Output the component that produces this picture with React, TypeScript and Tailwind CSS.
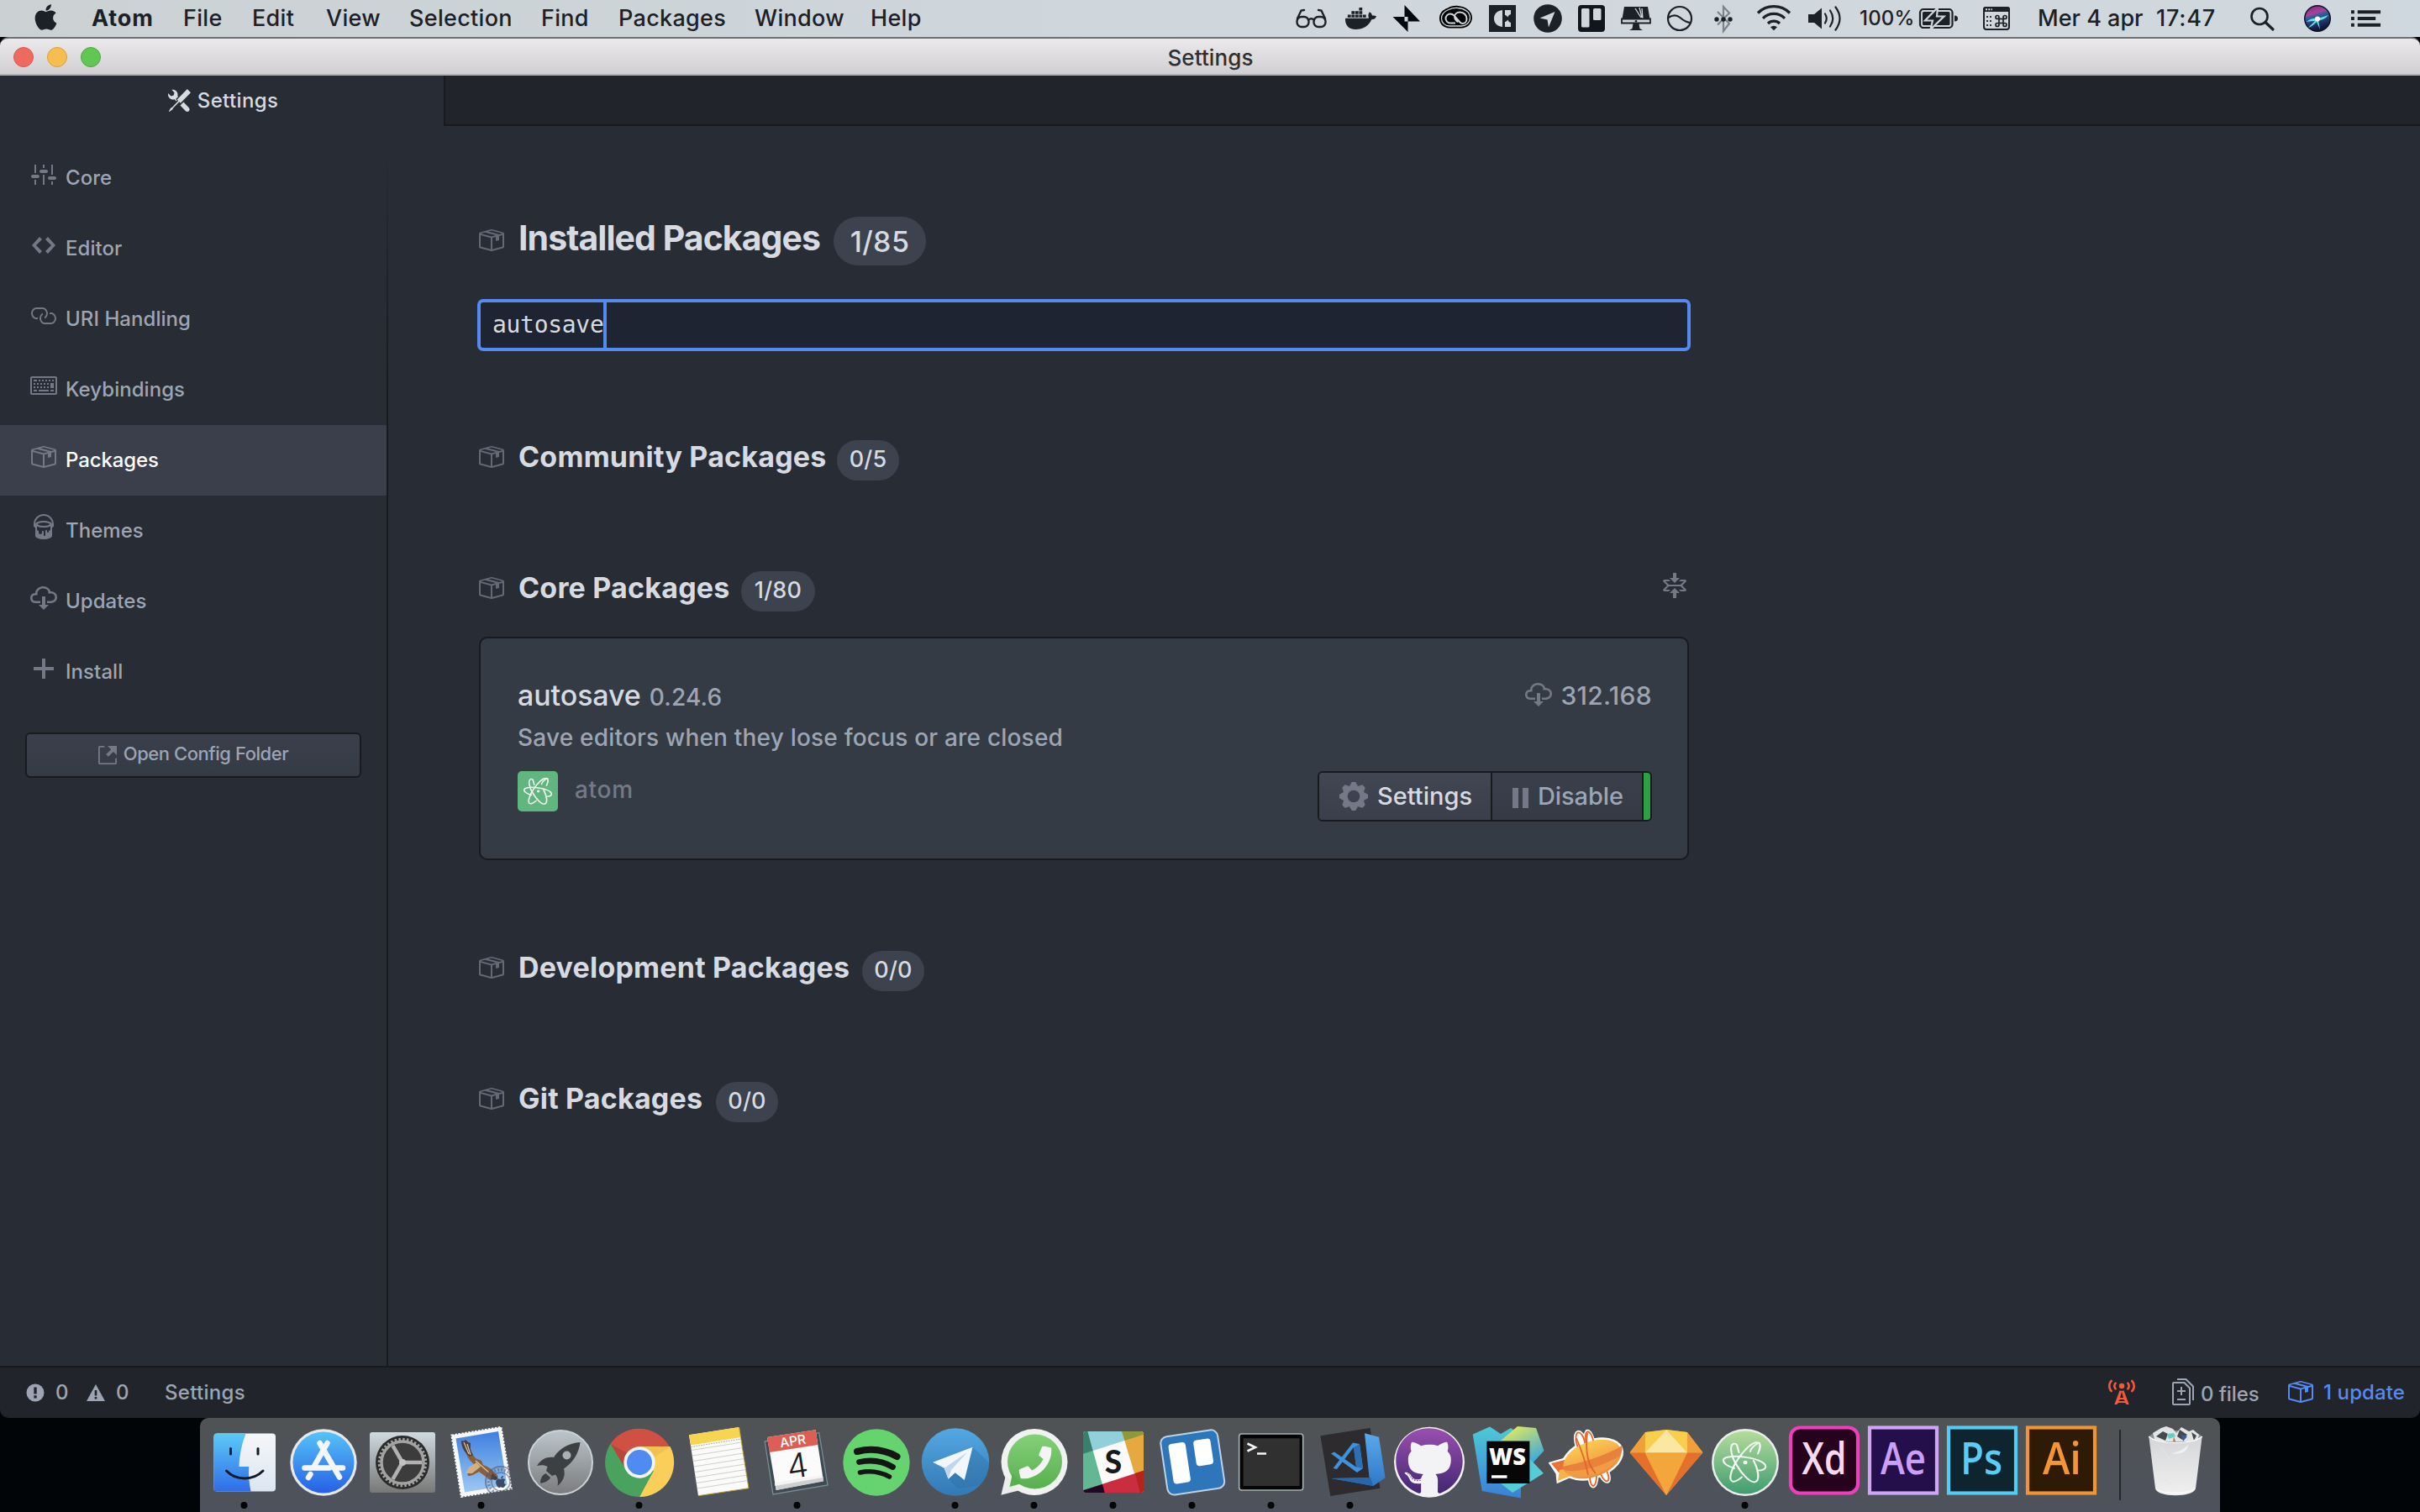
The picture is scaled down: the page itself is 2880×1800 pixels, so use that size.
import React from "react";
import { FaApple, FaDocker, FaGithub, FaPhoneAlt } from "react-icons/fa";

/* ---------- Octicon glyphs (16-unit grid, 2px per unit by default) ---------- */

const OCTICONS = {
  settings: "M4 7H3V2h1v5zm-1 7h1v-3H3v3zm5 0h1V8H8v6zm5 0h1v-2h-1v2zm1-12h-1v6h1V2zM9 2H8v2h1V2zM5 8H2c-.55 0-1 .45-1 1s.45 1 1 1h3c.55 0 1-.45 1-1s-.45-1-1-1zm5-3H7c-.55 0-1 .45-1 1s.45 1 1 1h3c.55 0 1-.45 1-1s-.45-1-1-1zm5 4h-3c-.55 0-1 .45-1 1s.45 1 1 1h3c.55 0 1-.45 1-1s-.45-1-1-1z",
  code: "M9.5 3L8 4.5 11.5 8 8 11.5 9.5 13 14 8 9.5 3zm-5 0L0 8l4.5 5L6 11.5 2.5 8 6 4.5 4.5 3z",
  link: "M4 9h1v1H4c-1.5 0-3-1.69-3-3.5S2.55 3 4 3h4c1.45 0 3 1.69 3 3.5 0 1.41-.91 2.72-2 3.25V8.59c.58-.45 1-1.27 1-2.09C10 5.22 8.98 4 8 4H4c-.98 0-2 1.22-2 2.5S3 9 4 9zm9-3h-1v1h1c1 0 2 1.22 2 2.5S13.98 12 13 12H9c-.98 0-2-1.22-2-2.5 0-.83.42-1.64 1-2.09V6.25c-1.09.53-2 1.84-2 3.25C6 11.31 7.55 13 9 13h4c1.45 0 3-1.69 3-3.5S14.5 6 13 6z",
  keyboard: "M10 5H9V4h1v1zM3 6H2v1h1V6zm5-2H7v1h1V4zM4 4H2v1h2V4zm8 7h2v-1h-2v1zM8 7h1V6H8v1zm-4 3H2v1h2v-1zm8-6h-1v1h1V4zm2 0h-1v1h1V4zm-2 5h2V6h-2v3zm4-6v9c0 .55-.45 1-1 1H1c-.55 0-1-.45-1-1V3c0-.55.45-1 1-1h14c.55 0 1 .45 1 1zm-1 0H1v9h14V3zM6 7h1V6H6v1zm0-3H5v1h1V4zM4 7h1V6H4v1zm1 4h6v-1H5v1zm5-4h1V6h-1v1zM3 8H2v1h1V8zm5 0v1h1V8H8zM6 8v1h1V8H6zM5 8H4v1h1V8zm5 1h1V8h-1v1z",
  pkg: "M1 4.27v7.47c0 .45.3.84.75.97l6.5 1.73c.16.05.34.05.5 0l6.5-1.73c.45-.13.75-.52.75-.97V4.27c0-.45-.3-.84-.75-.97l-6.5-1.74a1.4 1.4 0 0 0-.5 0L1.75 3.3c-.45.13-.75.52-.75.97zm7 9.09l-6-1.59V5l6 1.61v6.75zM2 4l2.5-.67L11 5.06l-2.5.67L2 4zm13 7.77l-6 1.59V6.61l2-.55V8.5l2-.53V5.53L15 5v6.77zm-2-7.24L6.5 2.8l2-.53L15 4l-2 .53z",
  paintcan: "M6 0C2.69 0 0 2.69 0 6v1c0 .55.45 1 1 1v5c0 1.1 2.24 2 5 2s5-.9 5-2V8c.55 0 1-.45 1-1V6c0-3.31-2.69-6-6-6zm3 10v.5c0 .28-.22.5-.5.5s-.5-.22-.5-.5V10c0-.28-.22-.5-.5-.5s-.5.22-.5.5v2.5c0 .28-.22.5-.5.5s-.5-.22-.5-.5v-2c0-.28-.22-.5-.5-.5s-.5.22-.5.5v.5c0 .55-.45 1-1 1s-1-.45-1-1v-1c-.55 0-1-.45-1-1V7.2c.91.49 2.36.8 4 .8 1.64 0 3.09-.31 4-.8V9c0 .55-.45 1-1 1zM6 7c-1.68 0-3.12-.41-3.71-1C2.88 5.41 4.32 5 6 5c1.68 0 3.12.41 3.71 1-.59.59-2.03 1-3.71 1zm0-3c-2.76 0-5 .89-5 2 0-2.76 2.24-5 5-5s5 2.24 5 5c0-1.1-2.24-2-5-2z",
  cloud: "M9 12h2l-3 3-3-3h2V7h2v5zm3-8c0-.44-.91-3-4.5-3C5.08 1 3 2.92 3 5 1.02 5 0 6.52 0 8c0 1.53 1 3 3 3h3V9.7H3C1.38 9.7 1.3 8.28 1.3 8c0-.17.05-1.7 1.7-1.7h1.3V5c0-1.39 1.56-2.7 3.2-2.7 2.55 0 3.13 1.55 3.2 1.8v1.2H12c.81 0 2.7.22 2.7 2.2 0 2.09-2.25 2.2-2.7 2.2h-2V11h2c2.08 0 4-1.16 4-3.5C16 5.06 14.08 4 12 4z",
  plus: "M12 9H7v5H5V9H0V7h5V2h2v5h5v2z",
  external: "M11 10h1v3c0 .55-.45 1-1 1H1c-.55 0-1-.45-1-1V3c0-.55.45-1 1-1h3v1H1v10h10v-3zM6 2l2.25 2.25L5 7.5 6.5 9l3.25-3.25L12 8V2H6z",
  tools: "M4.48 7.27c.26.26 1.28 1.33 1.28 1.33l.56-.58-.88-.91 1.69-1.8s-.76-.74-.43-.45c.32-1.19.03-2.51-.87-3.44C4.93.5 3.66.2 2.52.51l1.93 2-.51 1.96-1.89.52-1.93-1.99C-.19 4.17.1 5.48 1 6.4c.94.98 2.29 1.26 3.48.87zm6.44 1.94l-2.33 2.3 3.84 3.98c.31.33.73.49 1.14.49.41 0 .82-.16 1.14-.49.63-.65.63-1.7 0-2.35l-3.79-3.93zM16 2.53L13.55 0 6.33 7.46l.88.91-4.31 4.46-.99.53-1.39 2.27.35.37 2.2-1.44.51-1.02L7.9 9.08l.88.91L16 2.53z",
  fold: "M7 9l3 3H8v3H6v-3H4l3-3zm3-6H8V0H6v3H4l3 3 3-3zm4 2c0-.55-.45-1-1-1h-2.5l-1 1h3l-2 2h-7l-2-2h3l-1-1H1c-.55 0-1 .45-1 1l2.5 2.5L0 10c0 .55.45 1 1 1h2.5l1-1h-3l2-2h7l2 2h-3l1 1H13c.55 0 1-.45 1-1l-2.5-2.5L14 5z",
  tower: "M4.79 6.11c.25-.25.25-.67 0-.92-.32-.33-.48-.76-.48-1.19 0-.43.16-.86.48-1.19.25-.26.25-.67 0-.92a.613.613 0 0 0-.45-.19c-.16 0-.33.06-.45.19-.57.58-.85 1.35-.85 2.11 0 .76.29 1.53.85 2.11.25.25.66.25.9 0zM2.33.52a.651.651 0 0 0-.92 0C.48 1.48.01 2.74.01 3.99c0 1.26.47 2.52 1.4 3.48.25.26.66.26.91 0s.25-.68 0-.94c-.68-.7-1.02-1.62-1.02-2.54 0-.92.34-1.84 1.02-2.54a.66.66 0 0 0 .01-.93zm5.69 5.1A1.62 1.62 0 1 0 6.4 4c-.01.89.72 1.62 1.62 1.62zM14.59.53a.628.628 0 0 0-.91 0c-.25.26-.25.68 0 .94.68.7 1.02 1.62 1.02 2.54 0 .92-.34 1.83-1.02 2.54-.25.26-.25.68 0 .94a.651.651 0 0 0 .92 0c.93-.96 1.4-2.22 1.4-3.48A5.048 5.048 0 0 0 14.59.53zM8.02 6.92c-.41 0-.83-.1-1.2-.3L3.67 14.99h1.49l.86-1h4l.84 1h1.49L9.21 6.62c-.38.2-.78.3-1.19.3zm-.01.48L9.02 11h-2l.99-3.6zm-1.99 5.59l1-1h2l1 1h-4zm5.19-11.1c-.25.25-.25.67 0 .92.32.33.48.76.48 1.19 0 .43-.16.86-.48 1.19-.25.26-.25.67 0 .92a.63.63 0 0 0 .9 0c.57-.58.85-1.35.85-2.11 0-.76-.28-1.53-.85-2.11a.634.634 0 0 0-.9 0z",
  diff: "M6 7h2v1H6v2H5V8H3V7h2V5h1v2zm-3 6h5v-1H3v1zM7.5 2L11 5.5V15c0 .55-.45 1-1 1H1c-.55 0-1-.45-1-1V3c0-.55.45-1 1-1h6.5zM10 6L7 3H1v12h9V6zM8.5 0H3v1h5l4 4v8h1V4.5L8.5 0z",
};

type OctName = keyof typeof OCTICONS;

function Oct({ name, box = "0 0 16 16", className }: { name: OctName; box?: string; className: string }) {
  return (
    <svg viewBox={box} className={`shrink-0 fill-current ${className}`}>
      <path d={OCTICONS[name]} fillRule="evenodd" />
    </svg>
  );
}

/* ---------- macOS menu bar ---------- */

const MENUS: [string, string][] = [
  ["File", "w-[82px]"],
  ["Edit", "w-[88px]"],
  ["View", "w-[99px]"],
  ["Selection", "w-[157px]"],
  ["Find", "w-[92px]"],
  ["Packages", "w-[162px]"],
  ["Window", "w-[138px]"],
  ["Help", "w-[80px]"],
];

function StatusIcon({ box, className, children }: { box: string; className: string; children: React.ReactNode }) {
  return (
    <svg viewBox={box} className={`h-[44px] shrink-0 ${className}`}>
      {children}
    </svg>
  );
}

function MenuBar() {
  return (
    <div className="flex h-[44px] shrink-0 items-center bg-linear-to-r from-[#cbd1d3] via-[#cfd7dd] to-[#cfd8de] text-[27px] tracking-[0.3px] text-[#1c2127]">
      <div className="flex w-[109px] shrink-0 justify-start pl-[39px] pb-[4px]">
        <FaApple className="h-[35px] w-[31px]" />
      </div>
      <div className="w-[109px] shrink-0 font-bold tracking-[0.9px]">Atom</div>
      {MENUS.map(([label, w]) => (
        <div key={label} className={`shrink-0 ${w}`}>{label}</div>
      ))}
      <div className="ml-auto flex items-center pr-[46px]">
        <StatusIcon box="1541 0 40 44" className="w-[40px]">
          <g fill="none" stroke="#1c2127" strokeWidth="2.4" strokeLinecap="round">
            <rect x="1543.5" y="20" width="14" height="12" rx="5.5" />
            <rect x="1563.5" y="20" width="14" height="12" rx="5.5" />
            <path d="M1557 23.5q3.500-2.500 7 0M1544 22l4.500-9.500 3.500-.5M1577 22l-4.500-9.500-3.500-.5" />
          </g>
        </StatusIcon>
        <FaDocker className="ml-[20px] h-[42px] w-[37px]" />
        <StatusIcon box="1656 0 36 44" className="ml-[18px] w-[36px]">
          <path d="M1671.500 6v19.500h18.500zM1657.500 20h18v18z" fill="#05090d" />
        </StatusIcon>
        <StatusIcon box="1712 0 42 44" className="ml-[20px] w-[42px]">
          <path d="M1723 9.500c3-2 8-3 12-2.500 9 .5 17 6 17 14 0 7-6 12.500-13 12.500h-14c-7 0-12-5-12-11.500s4-10.500 10-12.500z" fill="#000" />
          <path d="M1724 11.500c3-1.500 7-2.500 11-2 8 .5 14.500 5 14.500 11.500 0 6-5 10-10.500 10h-14c-5.500 0-9.500-4-9.500-9s3.500-8.500 8.500-10.500z" fill="none" stroke="#cfd7dd" strokeWidth="1.300" />
          <path d="M1732 27.500h-6c-3 0-5.500-2.500-5.500-5.500s2.500-5.500 5.500-5.500c2 0 3.500 1 4.500 2l7 8c1 1 2 1.500 3 1.500 3 0 5-2.500 5-5.500 0-4.500-3.500-8-8-8-4 0-6.500 2.500-6.500 5.500s2 4 4 6.500" fill="none" stroke="#cfd7dd" strokeWidth="2" />
        </StatusIcon>
        <StatusIcon box="1771 0 34 44" className="ml-[17px] w-[34px]">
          <rect x="1772" y="6" width="32" height="32" fill="#1c2127" />
          <path d="M1788 12v20c-7-1-10-5-10-10s3-9 10-10zM1791 12h7v5c-2 .5-3 1.500-3.500 3.500-1.500-2-3-2.500-3.500-2.500zM1791 32h7v-5c-2-.5-3-1.500-3.500-3.500-1.500 2-3 2.500-3.500 2.500z" fill="#cfd7dd" />
        </StatusIcon>
        <StatusIcon box="1824 0 36 44" className="ml-[19px] w-[36px]">
          <circle cx="1842" cy="22" r="16.800" fill="#1c2127" />
          <path d="M1832.500 21.500l18-7.500-7.500 18.500-1.500-9z" fill="#cfd7dd" />
        </StatusIcon>
        <StatusIcon box="1877 0 34 44" className="ml-[17px] w-[34px]">
          <rect x="1878" y="6" width="32" height="32" rx="4" fill="#11161c" />
          <rect x="1882" y="10" width="9.500" height="22.500" rx="1.500" fill="#cfd7dd" />
          <rect x="1896" y="10" width="9.500" height="14" rx="1.500" fill="#cfd7dd" />
        </StatusIcon>
        <StatusIcon box="1928 0 38 44" className="ml-[17px] w-[38px]">
          <path d="M1933 8h28l2.500 14.500h-33z" fill="#1c2127" />
          <path d="M1946 10l7 11M1951 9l3 12M1954 10l1 12" stroke="#cfd7dd" strokeWidth="1.300" />
          <path d="M1930 22.500h34v5h-34z" fill="none" stroke="#1c2127" strokeWidth="1.800" />
          <circle cx="1947" cy="25.300" r="1.300" fill="#1c2127" />
          <path d="M1943.500 28h7l1 6 3.500 2h-16l3.500-2z" fill="#1c2127" />
        </StatusIcon>
        <StatusIcon box="1983 0 32 44" className="ml-[17px] w-[32px]">
          <g fill="none" stroke="#1c2127" strokeWidth="2.200">
            <circle cx="1999" cy="22" r="14" />
            <path d="M1985.500 21c5-3.500 10-3.500 14 0s8 6 13 6" />
          </g>
        </StatusIcon>
        <StatusIcon box="2038 0 26 44" className="ml-[23px] w-[26px]">
          <path d="M2044 14l14 14-7 9V8l7 7.500-14 14" fill="none" stroke="#7c848b" strokeWidth="2.200" />
          <g fill="#1c2127">
            <circle cx="2043" cy="23" r="2.700" />
            <circle cx="2051" cy="23" r="2.700" />
            <circle cx="2059" cy="23" r="2.700" />
          </g>
        </StatusIcon>
        <StatusIcon box="2090 0 42 44" className="ml-[26px] w-[42px]">
          <g fill="none" stroke="#1c2127" strokeWidth="3.200">
            <path d="M2092 15.500a27 27 0 0 1 38 0" />
            <path d="M2098 21.800a18.500 18.500 0 0 1 26 0" />
            <path d="M2104 28a10 10 0 0 1 14 0" />
          </g>
          <path d="M2107 32.300a5.700 5.700 0 0 1 8 0l-4 4z" fill="#1c2127" />
        </StatusIcon>
        <StatusIcon box="2151 0 43 44" className="ml-[19px] w-[43px]">
          <path d="M2152 17h7l9-7.500v25l-9-7.500h-7z" fill="#1c2127" />
          <g fill="none" stroke="#1c2127" strokeWidth="2.200" strokeLinecap="round">
            <path d="M2172 16.500q3.500 5.500 0 11" />
            <path d="M2178 12.500q6.500 9.500 0 19" />
            <path d="M2184.500 8.500q10 13.500 0 27" />
          </g>
        </StatusIcon>
        <div className="ml-[19px] w-[70px] text-[24px] tracking-[0.2px]">100%</div>
        <StatusIcon box="2283 0 48 44" className="w-[48px]">
          <rect x="2285" y="11" width="38.500" height="22" rx="4" fill="none" stroke="#1c2127" strokeWidth="2.200" />
          <path d="M2326 18.500q4 0 4 3.500t-4 3.500z" fill="#1c2127" />
          <rect x="2288" y="14" width="32.500" height="16" rx="1.500" fill="#1c2127" />
          <path d="M2306 9l-15 15.500h9l-2.500 10.500 16-15.500h-8.500z" fill="#1c2127" stroke="#cfd7dd" strokeWidth="2.200" />
        </StatusIcon>
        <StatusIcon box="2359 0 34 44" className="ml-[28px] w-[34px]">
          <rect x="2361" y="9" width="30" height="26" rx="3" fill="none" stroke="#1c2127" strokeWidth="2" />
          <path d="M2360 14V11q0-3 3-3h26q3 0 3 3v3z" fill="#1c2127" />
          <path d="M2363 11.200h8" stroke="#cfd7dd" strokeWidth="2" strokeDasharray="2 1.300" />
          <path d="M2365 19v13M2369 19v13" stroke="#1c2127" strokeWidth="1.800" strokeDasharray="2 3" />
          <g fill="none" stroke="#1c2127" strokeWidth="1.700">
            <rect x="2379" y="22.500" width="5" height="5" />
            <circle cx="2377" cy="20.500" r="2" />
            <circle cx="2386" cy="20.500" r="2" />
            <circle cx="2377" cy="29.500" r="2" />
            <circle cx="2386" cy="29.500" r="2" />
          </g>
        </StatusIcon>
        <div className="ml-[32px] w-[141px] whitespace-nowrap tracking-[0px]">Mer 4 apr</div>
        <div className="w-[110px] tracking-[0.8px]">17:47</div>
        <StatusIcon box="2676 0 32 44" className="w-[32px]">
          <circle cx="2689" cy="19.500" r="9.500" fill="none" stroke="#1c2127" strokeWidth="2.600" />
          <path d="M2696 26.500l9 8.500" stroke="#1c2127" strokeWidth="3.200" strokeLinecap="round" />
        </StatusIcon>
        <StatusIcon box="2741 0 34 44" className="ml-[33px] w-[34px]">
          <defs>
            <linearGradient id="siri" x1="0" y1="0" x2="0.300" y2="1">
              <stop offset="0" stopColor="#7b2a78" />
              <stop offset="0.350" stopColor="#a8439a" />
              <stop offset="0.500" stopColor="#2a5d9a" />
              <stop offset="1" stopColor="#131640" />
            </linearGradient>
          </defs>
          <circle cx="2758" cy="22" r="16" fill="#0c1024" />
          <circle cx="2758" cy="22" r="14.500" fill="url(#siri)" />
          <path d="M2745 26q6-5 13-4 8-2 13-4-5 6-12 6l2 11-4-9q-6 6-10 7 5-5 8-8-5 0-10 1z" fill="#6fe0e6" />
          <circle cx="2758" cy="22.500" r="3" fill="#f1fcff" />
        </StatusIcon>
        <StatusIcon box="2797 0 38 44" className="ml-[22px] w-[37px]">
          <g stroke="#1c2127" strokeWidth="4">
            <path d="M2798 14h4M2806 14h28M2798 22h4M2806 22h22M2798 30h4M2806 30h28" />
          </g>
        </StatusIcon>
      </div>
    </div>
  );
}

/* ---------- Window chrome ---------- */

function TitleBar() {
  return (
    <div className="grid h-[46px] shrink-0 grid-cols-3 items-center rounded-t-[10px] border-t-2 border-b-2 border-t-[#6d7073] border-b-[#b4b1b4] bg-linear-to-b from-[#ebe9ec] to-[#d1cfd1]">
      <div className="flex gap-[16px] pl-[16px] pt-[2px]">
        <span className="size-[24px] rounded-full border border-[#d9574d] bg-[#ee6a5f]" />
        <span className="size-[24px] rounded-full border border-[#dba03d] bg-[#f5be4f]" />
        <span className="size-[24px] rounded-full border border-[#50a73f] bg-[#61c654]" />
      </div>
      <div className="pt-[3px] pl-[1px] text-center text-[26px] leading-[39px] tracking-[0.1px] text-[#2f2e30]">Settings</div>
    </div>
  );
}

function TabBar() {
  return (
    <div className="flex h-[60px] shrink-0">
      <div className="flex w-[528px] items-center justify-center gap-[8px] pb-[1px] pl-[3px] text-[24px] tracking-[0.35px] text-[#d7dae0]">
        <Oct name="tools" className="size-[27px]" />
        <span>Settings</span>
      </div>
      <div className="flex-1 border-b-2 border-l-2 border-[#181a1f] bg-[#21252b]" />
    </div>
  );
}

const NAV: { label: string; icon: OctName; box: string; active?: boolean }[] = [
  { label: "Core", icon: "settings", box: "0.5 0 16 16" },
  { label: "Editor", icon: "code", box: "-1 0 16 16" },
  { label: "URI Handling", icon: "link", box: "0.5 0 16 16" },
  { label: "Keybindings", icon: "keyboard", box: "0 0 16 16" },
  { label: "Packages", icon: "pkg", box: "0.5 0 16 16", active: true },
  { label: "Themes", icon: "paintcan", box: "-2 0 16 16" },
  { label: "Updates", icon: "cloud", box: "0 0 16 16" },
  { label: "Install", icon: "plus", box: "-2 0 16 16" },
];

function Sidebar() {
  return (
    <div className="flex w-[462px] shrink-0">
      <div className="flex w-[460px] flex-col pt-[20px]">
        {NAV.map((n) => (
          <div
            key={n.label}
            className={
              n.active
                ? "flex h-[84px] items-center gap-[10px] bg-[#3a3f4b] pl-[36px] text-[24px] tracking-[-0.1px] text-white"
                : "flex h-[84px] items-center gap-[10px] pl-[36px] text-[24px] tracking-[0.05px] text-[#9da5b4]"
            }
          >
            <div className="pb-[8px] text-[#737986]">
              <Oct name={n.icon} box={n.box} className="size-[32px]" />
            </div>
            <span>{n.label}</span>
          </div>
        ))}
        <div className="mx-[30px] mt-[30px] flex h-[54px] items-center justify-center gap-[8px] rounded-[6px] border-2 border-[#181a1f] bg-linear-to-b from-[#3a3f4b] to-[#353b45] text-[22px] tracking-[-0.45px] text-[#9da5b4]">
          <Oct name="external" box="0 2 12 12" className="size-[22px] text-[#737986]" />
          <span className="pb-[4px]">Open Config Folder</span>
        </div>
      </div>
      <div className="w-[2px] bg-linear-to-b from-transparent from-[20px] to-[#181a1f] to-[320px]" />
    </div>
  );
}

/* ---------- Package list ---------- */

function PackageGlyph({ className }: { className: string }) {
  return <Oct name="pkg" box="1 0 15 16" className={`h-[32px] w-[30px] ${className}`} />;
}

function SubHeading({ title, count, titleW, badgeW, children }: { title: string; count: string; titleW: string; badgeW: string; children?: React.ReactNode }) {
  return (
    <div className="flex h-[48px] items-center">
      <div className="pb-[9px] text-[#636976]">
        <PackageGlyph className="" />
      </div>
      <h3 className={`ml-[17px] shrink-0 whitespace-nowrap pb-[9px] text-[34px] leading-[38px] font-bold tracking-[0.2px] text-[#d7dae0] ${titleW}`}>{title}</h3>
      <div className={`flex h-[48px] shrink-0 items-center justify-center rounded-full bg-[#3d424f] pb-[2px] text-[27px] tracking-[0.2px] text-[#d7dae0] ${badgeW}`}>{count}</div>
      {children}
    </div>
  );
}

function GearGlyph() {
  return (
    <svg viewBox="-17 -17 34 34" className="size-[34px] fill-[#737986]">
      {[0, 45, 90, 135, 180, 225, 270, 315].map((a) => (
        <path key={a} d="M-5.500-11L-2.300-17H2.300L5.500-11z" transform={`rotate(${a})`} />
      ))}
      <path fillRule="evenodd" d="M0-12.800a12.800 12.800 0 1 0 0 25.600a12.800 12.800 0 1 0 0-25.600zM0-7.300a7.300 7.300 0 1 1 0 14.600a7.300 7.300 0 1 1 0-14.600z" />
    </svg>
  );
}

function AtomOrbits({ stroke, width }: { stroke: string; width: number }) {
  return (
    <g fill="none" stroke={stroke} strokeWidth={width} strokeLinecap="round" transform="scale(1 .87)">
      <path d="M-12 8C-20 5-26 1-25-4C-23-9-9-9 2-7C15-5 27 1 25 7C24 10 20 11 16 11" />
      <path d="M-6-14C-8-22-7-27-12-26C-18-24-15-7-9 4C-4 15 6 29 12 27C18 25 16 10 11-2" transform="rotate(-2)" />
      <path d="M7-15C8-21 17-27 17-27C10-30-1-16-8-4C-15 8-20 24-14 26C-11 27-7 24-3 20" />
      <path d="M17-27C20-25 18-17 16-12" />
      <circle cx="1" cy="0" r="2.600" fill={stroke} stroke="none" />
    </g>
  );
}

function PackageCard() {
  return (
    <div className="mt-[30px] flex h-[266px] flex-col rounded-[10px] border-2 border-[#181a1f] bg-[#353b45] pt-[48px] pr-[42px] pl-[44px] text-[#9da5b4]">
      <div className="flex h-[40px] items-center justify-between">
        <div className="flex items-baseline gap-[10px] pt-[2px]">
          <span className="text-[34px] leading-[40px] font-medium tracking-[-0.1px] text-[#d7dae0]">autosave</span>
          <span className="text-[28px] tracking-[0.2px]">0.24.6</span>
        </div>
        <div className="flex items-center gap-[10px]">
          <div className="pb-[2px] text-[#737986]">
            <Oct name="cloud" className="size-[32px]" />
          </div>
          <span className="text-[30px] tracking-[0.3px]">312.168</span>
        </div>
      </div>
      <div className="mt-[10px] h-[40px] text-[28px] leading-[40px] tracking-[0.2px]">Save editors when they lose focus or are closed</div>
      <div className="mt-[20px] flex items-start justify-between">
        <div className="flex h-[48px] items-center gap-[20px]">
          <svg viewBox="-37 -37 74 74" className="size-[48px] rounded-[5px] bg-[#61b57e]">
            <AtomOrbits stroke="#f0faf2" width={2.6} />
          </svg>
          <span className="pb-[5px] text-[28px] tracking-[0.7px] text-[#737986]">atom</span>
        </div>
        <div className="flex h-[60px] w-[398px] overflow-hidden rounded-[6px] border-2 border-[#181a1f] text-[29px]">
          <div className="flex w-[206px] items-center gap-[11px] border-r-2 border-[#181a1f] bg-linear-to-b from-[#414653] to-[#3a3f4b] pl-[24px] tracking-[0px] text-[#d7dae0]">
            <GearGlyph />
            <span>Settings</span>
          </div>
          <div className="flex flex-1 items-center gap-[11px] bg-linear-to-b from-[#3a3f4b] to-[#353b45] pl-[24px] tracking-[-0.1px]">
            <svg viewBox="0 0 19 24" className="mt-[4px] h-[24px] w-[19px] fill-[#737986]">
              <path d="M0 0h7v24H0zM12 0h7v24h-7z" />
            </svg>
            <span>Disable</span>
          </div>
          <div className="w-[10px] border-l-2 border-[#181a1f] bg-[#2ba143]" />
        </div>
      </div>
    </div>
  );
}

function Main() {
  return (
    <div className="flex w-[1548px] flex-col pt-[108px] pl-[108px]">
      <div className="flex h-[58px] items-center">
        <PackageGlyph className="mb-[2px] text-[#636976]" />
        <h2 className="ml-[17px] w-[375px] shrink-0 whitespace-nowrap pb-[9px] text-[41px] leading-[46px] font-bold tracking-[-0.95px] text-[#d7dae0]">Installed Packages</h2>
        <div className="flex h-[58px] w-[110px] items-center justify-center rounded-full bg-[#3d424f] text-[34px] tracking-[0.4px] text-[#d7dae0]">1/85</div>
      </div>
      <div className="-mx-[2px] mt-[40px] flex h-[62px] items-center rounded-[7px] border-4 border-[#568af2] bg-[#1f2432] pl-[14px]">
        <span className="font-['DejaVu_Sans_Mono',monospace] text-[28px] tracking-[-0.3px] text-[#d7dae0]">autosave</span>
        <span className="h-full w-[4px] bg-[#568af2]" />
      </div>
      <div className="mt-[106px] flex flex-col">
        <SubHeading title="Community Packages" count="0/5" titleW="w-[379px]" badgeW="w-[74px]" />
        <div className="h-[108px]" />
        <SubHeading title="Core Packages" count="1/80" titleW="w-[265px]" badgeW="w-[88px]">
          <Oct name="fold" box="0 0 14 16" className="mt-[2px] mr-[3px] ml-auto h-[32px] w-[28px] self-start text-[#737986]" />
        </SubHeading>
        <PackageCard />
        <div className="h-[108px]" />
        <SubHeading title="Development Packages" count="0/0" titleW="w-[409px]" badgeW="w-[74px]" />
        <div className="h-[108px]" />
        <SubHeading title="Git Packages" count="0/0" titleW="w-[235px]" badgeW="w-[74px]" />
      </div>
    </div>
  );
}

function StatusBar() {
  return (
    <div className="flex h-[62px] shrink-0 items-center rounded-b-[10px] border-t-2 border-[#181a1f] bg-[#21252b] pr-[18px] pl-[31px] text-[24px] tracking-[0.1px] text-[#9da5b4]">
      <svg viewBox="0 0 22 22" className="size-[22px]">
        <circle cx="11" cy="11" r="10.500" className="fill-[#9da5b4]" />
        <path d="M9.300 4.500h3.400v8H9.300zM9.300 14.300h3.400v3.200H9.300z" className="fill-[#21252b]" />
      </svg>
      <span className="ml-[13px] w-[37px]">0</span>
      <svg viewBox="0 0 22 20" className="h-[20px] w-[22px]">
        <path d="M11 0l11 20H0z" className="fill-[#9da5b4]" />
        <path d="M9.700 7h2.600v6.500H9.700zM9.700 15h2.600v2.600H9.700z" className="fill-[#21252b]" />
      </svg>
      <span className="ml-[13px] w-[58px]">0</span>
      <span className="tracking-[0.3px]">Settings</span>
      <div className="ml-auto flex items-center">
        <Oct name="tower" className="size-[32px] text-[#f4593c]" />
        <div className="ml-[44px] mb-[2px]">
          <Oct name="diff" box="0 0 13 16" className="h-[32px] w-[26px]" />
        </div>
        <span className="ml-[8px] w-[104px] pt-[4px] tracking-[-0.1px]">0 files</span>
        <div className="flex items-center gap-[12px] text-[#568af2]">
          <PackageGlyph className="mb-[2px]" />
          <span>1 update</span>
        </div>
      </div>
    </div>
  );
}

/* ---------- Dock ---------- */

function polar(r: number, deg: number, cx = 47, cy = 53): [number, number] {
  const a = (deg * Math.PI) / 180;
  return [cx + r * Math.cos(a), cy + r * Math.sin(a)];
}

function Grad({ id, from, to, x2 = 0, y2 = 1 }: { id: string; from: string; to: string; x2?: number; y2?: number }) {
  return (
    <linearGradient id={id} x1="0" y1="0" x2={x2} y2={y2}>
      <stop offset="0" stopColor={from} />
      <stop offset="1" stopColor={to} />
    </linearGradient>
  );
}

function AdobeTile({ label, frame, fill, ink, x, w, round = 0 }: { label: string; frame: string; fill: string; ink: string; x: number; w: number; round?: number }) {
  return (
    <>
      <rect x="7" y="11.500" width="80" height="78" rx={round} fill={fill} stroke={frame} strokeWidth="4.200" />
      <text x={x} y="67" fontSize="52" fontWeight="600" fontFamily="'Open Sans','Noto Sans',sans-serif" fill={ink} textLength={w} lengthAdjust="spacingAndGlyphs">{label}</text>
    </>
  );
}

const APPS: { name: string; running?: boolean; art: React.ReactNode }[] = [
  {
    name: "Finder",
    running: true,
    art: (
      <>
        <defs>
          <Grad id="finL" from="#5bcbf7" to="#2f6ce8" />
          <Grad id="finR" from="#f6f6f8" to="#dbe6f2" />
        </defs>
        <rect x="10.500" y="18.500" width="73.500" height="69" rx="4" fill="url(#finR)" />
        <path d="M14.500 18.500H48.600C44 30 41 44 40.500 58H52.300C51.500 68 52.500 78 54.500 87.500H14.500a4 4 0 0 1-4-4V22.500a4 4 0 0 1 4-4z" fill="url(#finL)" />
        <path d="M30.500 36.500v6.500M63 36.500v6.500" stroke="#121a2c" strokeWidth="3" strokeLinecap="round" />
        <path d="M25.500 63C37 75 57 75 69 63" fill="none" stroke="#121a2c" strokeWidth="3" strokeLinecap="round" />
      </>
    ),
  },
  {
    name: "App Store",
    art: (
      <>
        <defs><Grad id="store" from="#55c3f8" to="#2660e6" /></defs>
        <circle cx="47" cy="53" r="39.700" fill="#e6e8ec" />
        <circle cx="47" cy="53" r="36.500" fill="url(#store)" />
        <g stroke="#f3f6fb" strokeWidth="6.500" strokeLinecap="round" fill="none">
          <path d="M51.500 30L35 59M42.500 30L66 70.500M24.500 59.500H54M62 59.500H70M31.500 67L29 71" />
        </g>
      </>
    ),
  },
  {
    name: "System Preferences",
    art: (
      <>
        <defs><Grad id="pref" from="#cfdae0" to="#777777" /></defs>
        <rect x="8" y="17" width="78" height="72" rx="3" fill="url(#pref)" />
        <circle cx="47" cy="53" r="32" fill="#2b2b2b" />
        <circle cx="47" cy="53" r="25" fill="#3c3c3c" stroke="#a3a3a1" strokeWidth="3.500" />
        <circle cx="47" cy="53" r="27.500" fill="none" stroke="#a3a3a1" strokeWidth="3.500" strokeDasharray="2.400 2.400" />
        {[0, 120, 240].map((a) => {
          const [x, y] = polar(23, a);
          return <path key={a} d={`M47 53L${x.toFixed(1)} ${y.toFixed(1)}`} stroke="#b3b2b0" strokeWidth="4.500" />;
        })}
        <circle cx="47" cy="53" r="4" fill="#c4c3c0" />
      </>
    ),
  },
  {
    name: "Mail",
    running: true,
    art: (
      <>
        <defs><Grad id="mail" from="#3f7fdf" to="#9cc9f2" /></defs>
        <path d="M11.500 20.700L70.300 11L82.600 84.300L23 93.700z" fill="#f7f8fa" stroke="#f7f8fa" strokeWidth="2.200" strokeDasharray="2.500 1.500" />
        <path d="M16.500 24.500L67 16L77.500 80L27 88.500z" fill="url(#mail)" />
        <path d="M23 27l3 1 2-2 3 3 3 1c-1 7 1 12 6 18l7 3 2 5c7 2 13 7 18 14l-3 2-5-1-2 2c-5-3-9-6-13-9-5 3-9 5-13 5l-1-4c4-3 6-6 8-10-8-6-12-16-12-28z" fill="#8a5f3c" />
        <path d="M23 27l3 1 2-2 3 3 3 1c-1 6 0 10 3 14l-4 2c-6-5-10-11-10-19zM60 66l7 6-3 2-5-1-2 2z" fill="#4a3e3a" />
        <path d="M26 29l6 14M30 31l4 13M40 51l16 14" stroke="#d9c3a2" strokeWidth="1.300" />
        <path d="M32 59l9-6 5 5-10 8-8 0z" fill="#d3b083" />
        <g fill="none" stroke="#4a5468" strokeOpacity="0.550">
          <circle cx="70" cy="76" r="18" strokeWidth="2" />
          <circle cx="70" cy="76" r="11" strokeWidth="1.500" />
          <circle cx="70" cy="76" r="14.500" strokeWidth="3.500" strokeDasharray="2 2" />
        </g>
        <FaApple x={62} y={68} size={16} color="#3c4a66" />
      </>
    ),
  },
  {
    name: "Launchpad",
    art: (
      <>
        <defs><Grad id="lp" from="#bcc6cb" to="#7b7b7d" /></defs>
        <circle cx="47" cy="53" r="38" fill="url(#lp)" stroke="#c9d4d9" strokeWidth="2" />
        <path d="M70.500 29C57 30 46 36 39 47C31 46 24 49 19 57C24 56 28 56 31.500 58L30 63L37 69L41 67.500C44 71 44.500 76 43.500 81C51 75 53 68 51 60.500C62 53 69 42 70.500 29z" fill="#3c4043" />
        <circle cx="54.500" cy="44.500" r="5" fill="#aab1b5" />
        <path d="M29.500 66C25 68 23 73 23 77.500C28 77.500 33 75 35 71z" fill="#3c4043" />
      </>
    ),
  },
  {
    name: "Chrome",
    running: true,
    art: (
      <>
        <path d="M47 53L11.500 32.500A41 41 0 0 1 82.500 34H47z" fill="#d05144" />
        <path d="M47 34H83.500A41 41 0 0 1 47 94L63 62z" fill="#f9cf59" />
        <path d="M47 53L12.500 31A41 41 0 0 0 47 94L64 63z" fill="#49a35f" />
        <path d="M47 34.500L83.600 34.500L64 47z" fill="#e9b84a" opacity="0.600" />
        <path d="M12.500 31L30 61L38 45z" fill="#b8463b" />
        <path d="M12.500 31L30.500 61L26 62z" fill="#49a35f" />
        <circle cx="47" cy="53" r="18.700" fill="#f4f4f4" />
        <circle cx="47" cy="53" r="15" fill="#4f8bf0" />
      </>
    ),
  },
  {
    name: "Notes",
    art: (
      <>
        <path d="M12 20.300L71.600 11L83 83.700L23 92.700z" fill="#fbfbfa" />
        <path d="M12 20.300L71.600 11L73.500 23L14 32.500z" fill="#f8d551" />
        <g stroke="#cfcfcd" strokeWidth="1">
          {[5, 11.500, 18, 24.500, 31, 37.500, 44, 50.500].map((d) => (
            <path key={d} d={`M${14 + d * 0.155} ${33.500 + d}L${74 + d * 0.155} ${24 + d}`} />
          ))}
        </g>
        <path d="M14.500 34.500L74 25" stroke="#a5a08a" strokeWidth="1" strokeDasharray="1.500 1.500" />
        <path d="M23 92.700L83 83.700L71.600 11" fill="none" stroke="#b89a3a" strokeWidth="1" />
      </>
    ),
  },
  {
    name: "Calendar",
    running: true,
    art: (
      <>
        <path d="M8.200 28L72.700 17.700L83 80L18 91z" fill="#3f4a52" stroke="#7c8b94" strokeWidth="1.300" />
        <path d="M11 23L68.600 14.300L78 75L21.700 86z" fill="#fbfbfb" />
        <path d="M20.500 79L77.500 70L78 75.500L21.700 86z" fill="#cfcfcf" />
        <path d="M19.800 77L76.800 68L77.200 71L20.500 81z" fill="#f4f4f4" />
        <path d="M11 23L68.600 14.300L71.300 32L13.700 41z" fill="#dc5e54" />
        <text x="0" y="5.500" transform="translate(41.500 27.500) rotate(-8.800)" textAnchor="middle" fontSize="15.500" fontFamily="Inter,sans-serif" fill="#fff">APR</text>
        <text x="0" y="14.500" transform="translate(47 56.500) rotate(-8.800)" textAnchor="middle" fontSize="40" fontWeight="300" fontFamily="Inter,sans-serif" fill="#1d1d1f">4</text>
      </>
    ),
  },
  {
    name: "Spotify",
    art: (
      <>
        <circle cx="47" cy="53" r="39.700" fill="#65d46e" />
        <g fill="none" stroke="#141615" strokeLinecap="round">
          <path d="M24 40C40 36 57 38 71.500 46" strokeWidth="8" />
          <path d="M26.500 52.500C40 49.500 54 51 66.500 58.500" strokeWidth="6.800" />
          <path d="M27.500 65C39 62.500 51 64 62.500 70" strokeWidth="5.500" />
        </g>
      </>
    ),
  },
  {
    name: "Telegram",
    running: true,
    art: (
      <>
        <defs>
          <Grad id="tg" from="#54a8e3" to="#3279b4" />
          <clipPath id="tgc"><circle cx="47" cy="52.500" r="40.200" /></clipPath>
        </defs>
        <circle cx="47" cy="52.500" r="40.200" fill="url(#tg)" />
        <path d="M67.500 34.700L90 56L80 80L50 84L38.600 72.700z" fill="#2c6ba1" opacity="0.350" clipPath="url(#tgc)" />
        <path d="M20.200 52.700L67.500 34.700L57.800 74L46.700 65.300L38.600 72.700L33.700 59.700z" fill="#f2f7fc" />
        <path d="M33.700 59.700L61 41L42 62L38.600 72.700z" fill="#c3d5ea" />
      </>
    ),
  },
  {
    name: "WhatsApp",
    running: true,
    art: (
      <>
        <defs><Grad id="wa" from="#85d07a" to="#57b04d" /></defs>
        <circle cx="47" cy="52.500" r="39.500" fill="#f1f1f1" />
        <path d="M7.400 91.700L13 68L30 86z" fill="#ececec" />
        <circle cx="47.500" cy="52" r="32.500" fill="url(#wa)" />
        <path d="M17.500 82L21 66L32 78z" fill="#57b04d" />
        <g transform="translate(67.500 33.500) scale(-1 1)">
          <FaPhoneAlt size={39} color="#f4f4f4" />
        </g>
      </>
    ),
  },
  {
    name: "Slack",
    running: true,
    art: (
      <>
        <clipPath id="slk"><rect x="11" y="16" width="72" height="73" rx="3.500" /></clipPath>
        <g clipPath="url(#slk)">
          <rect x="11" y="16" width="72" height="73" fill="#fbfbfb" />
          <path d="M11 16H83V19.700L11 42.700z" fill="#93cfdb" />
          <path d="M11 16H16.300L36.700 89.300H11z" fill="#62b795" />
          <path d="M57 16H83V89.300H79z" fill="#e5a93f" />
          <path d="M11 86.300L83 62.700V90H11z" fill="#ca2c40" />
          <path d="M11 16H16.300L22.500 39L11 42.700z" fill="#397f6c" />
          <path d="M57 16H83V19.700L60.500 27z" fill="#8c9a3d" />
          <path d="M11 86.300L34 79L37 90H11z" fill="#1f0a24" />
          <path d="M73 66L83 62.700V90H79z" fill="#b3241d" />
        </g>
        <text x="47" y="66" textAnchor="middle" fontSize="37" fontWeight="900" fontFamily="Lato,sans-serif" fill="#17191d">S</text>
      </>
    ),
  },
  {
    name: "Trello",
    running: true,
    art: (
      <g transform="rotate(-8.500 47 53)">
        <rect x="13" y="18" width="68.500" height="70" rx="8" fill="#2e76ba" stroke="#b8d3ea" strokeWidth="2" />
        <rect x="21.500" y="27.500" width="20.500" height="48" rx="4" fill="#fff" />
        <rect x="51.500" y="27.500" width="20.500" height="31" rx="4" fill="#fff" />
      </g>
    ),
  },
  {
    name: "Terminal",
    running: true,
    art: (
      <>
        <rect x="8.700" y="19" width="76" height="67" rx="3" fill="#050505" stroke="#a7b0b3" strokeWidth="1.600" />
        <rect x="13.600" y="24.300" width="67" height="56.700" fill="#303030" />
        <path d="M18.500 30.500L28 35L18.500 39.500M30 42.500H41" fill="none" stroke="#f5f5f5" strokeWidth="2.500" />
      </>
    ),
  },
  {
    name: "Code",
    running: true,
    art: (
      <>
        <defs><Grad id="vsc" from="#5aa9ea" to="#2f78c8" /></defs>
        <path d="M11.400 21.300L70.600 12L82.500 83.700L23.300 93z" fill="#2d2b2e" />
        <path d="M64 18.300L81 22.700L88.600 71.300L74.300 81L24.500 72L69.500 71z" fill="url(#vsc)" />
        <path d="M24.500 72L71 71L74.300 81z" fill="#2468ab" />
        <path d="M50 29.500L58 31L62 60L55 65L24 42.500L28 40.500L54 58.500L51 35L31 61L26.500 60z" fill="#3f92dc" />
        <path d="M51 35L58 31L62 60L54 58.500z" fill="#2c6fb5" />
      </>
    ),
  },
  {
    name: "GitHub",
    art: (
      <>
        <defs><Grad id="gh" from="#9a4fb0" to="#432873" /></defs>
        <circle cx="47" cy="52.700" r="42" fill="#f3f2f4" />
        <FaGithub x={6} y={11} size={82} fill="url(#gh)" />
      </>
    ),
  },
  {
    name: "WebStorm",
    art: (
      <>
        <defs>
          <Grad id="ws1" from="#4fc9d6" to="#3a7fd8" />
          <Grad id="ws2" from="#f8f04e" to="#3aa9df" x2={0.600} />
        </defs>
        <path d="M4.700 19.500L25 10.500L38 19L50 12L72 27L72 78L62 79L62 95.500L15.700 87z" fill="url(#ws1)" />
        <path d="M38 27L58 10L80 12L89.500 39L72 58V27z" fill="url(#ws2)" />
        <path d="M72 48L89 66L52 89L38 78L72 78z" fill="#55cdd9" />
        <rect x="21.400" y="27.700" width="51" height="50.300" fill="#070707" />
        <text x="24" y="56" fontSize="29" fontWeight="800" fontFamily="'Open Sans',sans-serif" fill="#fff" textLength="44" lengthAdjust="spacingAndGlyphs">WS</text>
        <path d="M27 70H45.500" stroke="#fff" strokeWidth="3.500" />
      </>
    ),
  },
  {
    name: "Zeplin",
    art: (
      <>
        <defs><Grad id="zep" from="#fccb52" to="#ee8a3c" /></defs>
        <g fill="#fff" stroke="#fff" strokeWidth="3">
          <ellipse cx="39" cy="29" rx="6" ry="13" transform="rotate(-14 39 29)" />
          <ellipse cx="50" cy="29" rx="5" ry="14" transform="rotate(-12 50 29)" />
          <ellipse cx="54" cy="69" rx="5" ry="13" />
          <ellipse cx="67" cy="66" rx="5" ry="11" transform="rotate(-24 67 66)" />
          <path d="M3 54L20 49L30 68L12 76L11 66z" />
          <ellipse cx="53" cy="49" rx="37" ry="22" transform="rotate(-20 53 49)" />
        </g>
        <g fill="#fff" stroke="#e2662f" strokeWidth="1.800">
          <ellipse cx="39" cy="29" rx="5" ry="12" transform="rotate(-14 39 29)" />
          <ellipse cx="50" cy="29" rx="4.500" ry="13" transform="rotate(-12 50 29)" />
          <ellipse cx="54" cy="69" rx="4" ry="12" />
          <ellipse cx="67" cy="66" rx="4" ry="10" transform="rotate(-24 67 66)" />
        </g>
        <path d="M4 54L20 50L23 60L13 65z" fill="#e9713a" />
        <path d="M12 75L14 62L24 60L30 68z" fill="#f7b347" />
        <ellipse cx="53" cy="49" rx="36" ry="21" transform="rotate(-20 53 49)" fill="url(#zep)" />
        <path d="M17 58C35 55 70 45 88 33C90 42 84 50 74 55C55 66 30 70 19 62z" fill="#e8813b" />
        <path d="M18 62C35 66 65 58 84 46C78 60 58 68 45 70C34 71 23 68 18 62z" fill="#f29b45" />
        <path d="M34 24C40 38 45 52 48 68M47 18C45 34 46 54 57 66" fill="none" stroke="#e2662f" strokeWidth="1.800" />
      </>
    ),
  },
  {
    name: "Sketch",
    art: (
      <>
        <path d="M3.600 41.300L22 17L47.300 14L72 17L90.500 41.300L47 92z" fill="#f6a63b" />
        <path d="M3.600 41.300H21.600L47 92z" fill="#e4702b" />
        <path d="M90.500 41.300H72L47 92z" fill="#e4702b" />
        <path d="M21.600 41.300H72L47 92z" fill="#f3a63c" />
        <path d="M22 17L47.300 14L21.600 41.300zM72 17L47.300 14L72 41.300z" fill="#f9ce4a" />
        <path d="M22 17L3.600 41.300H21.600zM72 17L90.500 41.300H72z" fill="#f0a03a" />
        <path d="M47.300 14L21.600 41.300H72z" fill="#fbe7a0" />
      </>
    ),
  },
  {
    name: "Atom",
    running: true,
    art: (
      <>
        <defs><Grad id="atm" from="#b5dc9b" to="#3f9d71" /></defs>
        <circle cx="47" cy="53" r="40" fill="#ebedee" />
        <circle cx="47" cy="53" r="37.500" fill="url(#atm)" />
        <g transform="translate(46 53)">
          <AtomOrbits stroke="#f2faf4" width={2.2} />
        </g>
      </>
    ),
  },
  { name: "Xd", art: <AdobeTile label="Xd" frame="#ee3fbd" fill="#27021d" ink="#f7d9f0" x={20.500} w={53} round={11} /> },
  { name: "After Effects", art: <AdobeTile label="Ae" frame="#cfa5f6" fill="#240f4a" ink="#cb9ff5" x={20} w={54} /> },
  { name: "Photoshop", art: <AdobeTile label="Ps" frame="#55cbf4" fill="#0e2530" ink="#58cdf6" x={21} w={50} /> },
  { name: "Illustrator", art: <AdobeTile label="Ai" frame="#f09533" fill="#2e1a05" ink="#f39533" x={25} w={46} /> },
];

function Dock() {
  return (
    <div className="ml-[238px] flex h-[112px] w-[2404px] rounded-t-[10px] bg-linear-to-b from-[#505254] to-[#4e525d] pl-[6px]">
      {APPS.map((app) => (
        <svg key={app.name} viewBox="0 0 94 112" className="h-[112px] w-[94px] shrink-0 overflow-visible">
          {app.art}
          {app.running && <circle cx="46.500" cy="104" r="4" fill="#000" />}
        </svg>
      ))}
      <div className="mt-[14px] ml-[22px] h-[84px] w-[2px] shrink-0 bg-[#24272b]" />
      <svg viewBox="2552 0 74 112" className="ml-[28px] h-[112px] w-[74px] shrink-0">
        <defs><Grad id="bin" from="#d5d6d7" to="#f0f0f1" /></defs>
        <ellipse cx="2589" cy="23" rx="31.500" ry="8" fill="#8d9194" />
        <path d="M2562 18l10-6 6-2 8 3 4 5 6-7 9 5 5-2 7 6-2 8h-50z" fill="#e3e4e5" />
        <path d="M2566 22l8-6 6 3-3 8zM2594 14l9 6-6 6-6-4zM2608 17l6 4-3 6z" fill="#46484d" />
        <path d="M2579 19l8-1 2 4-8 3z" fill="#5fd0c5" />
        <path d="M2596 20l7 2-5 6z" fill="#3b5f9c" />
        <path d="M2587 22l2 6-3 1z" fill="#d0703c" />
        <path d="M2557.300 22C2566 32 2612 32 2620.700 22L2613 84C2611 95 2567 95 2565 84z" fill="url(#bin)" />
        <path d="M2557.300 22C2566 32 2612 32 2620.700 22" fill="none" stroke="#f7f7f7" strokeWidth="1.500" />
        <path d="M2584 42c8-1 14-4 20-10-1 8-8 12-20 10z" fill="#f1f1f2" />
        <path d="M2572 36l10 12M2600 50l-14 18M2571 70l12 8" fill="none" stroke="#e6e6e7" strokeWidth="1" />
        <path d="M2566 84c6 6 40 6 46 0-1 8-45 8-46 0z" fill="#fafafa" />
      </svg>
    </div>
  );
}

export default function App() {
  return (
    <div className="flex h-[1800px] w-[2880px] flex-col overflow-hidden bg-[#020507] font-['Inter',sans-serif] font-[450]">
      <MenuBar />
      <TitleBar />
      <div className="flex min-h-0 flex-1 flex-col bg-[#282c34]">
        <TabBar />
        <div className="flex flex-1">
          <Sidebar />
          <Main />
        </div>
      </div>
      <StatusBar />
      <Dock />
    </div>
  );
}
